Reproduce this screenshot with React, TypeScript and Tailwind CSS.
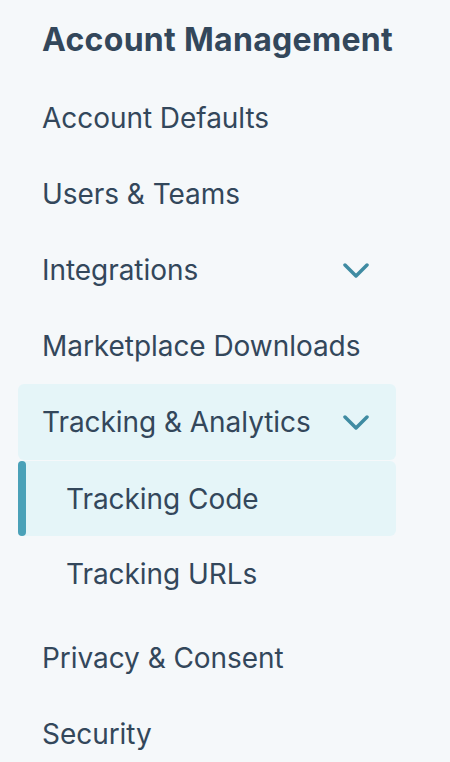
import React from 'react';

const Chevron: React.FC = () => (
  <svg width="26" height="15" viewBox="0 0 26 15" fill="none" className="shrink-0">
    <path d="M2 2l11 11L24 2" stroke="#3f8ba2" strokeWidth="3.5" strokeLinecap="round" strokeLinejoin="round" />
  </svg>
);

type NavItemProps = {
  label: string;
  hasChevron?: boolean;
  expanded?: boolean;
  sub?: boolean;
  selected?: boolean;
};

const NavItem: React.FC<NavItemProps> = ({ label, hasChevron, expanded, sub, selected }) => {
  const highlight = expanded || selected;
  return (
    <li
      className={`relative flex items-center justify-between rounded-md pr-[27px] ${
        sub ? 'pl-[48px]' : 'pl-[24px]'
      } ${highlight ? 'bg-[#e5f5f8]' : ''} ${selected ? 'mt-px h-[75px]' : 'h-[76px]'}`}
    >
      {selected && <span className="absolute left-0 top-0 h-full w-[8px] rounded-full bg-[#4aa1b8]" />}
      <span>{label}</span>
      {hasChevron && <Chevron />}
    </li>
  );
};

export default function App() {
  return (
    <div className="min-h-[762px] w-[450px] bg-[#f5f8fa] pl-[18px] text-[#33475b] [font-family:Inter,'Noto_Sans',sans-serif]">
      <h2 className="flex h-[80px] items-center pl-[24px] text-[32px] font-bold leading-none tracking-[0.3px]">
        Account Management
      </h2>
      <ul className="w-[378px] text-[28px] leading-none tracking-[-0.05px]">
        <NavItem label="Account Defaults" />
        <NavItem label="Users & Teams" />
        <NavItem label="Integrations" hasChevron />
        <NavItem label="Marketplace Downloads" />
        <NavItem label="Tracking & Analytics" hasChevron expanded />
        <li>
          <ul className="mb-[8px]">
            <NavItem label="Tracking Code" sub selected />
            <NavItem label="Tracking URLs" sub />
          </ul>
        </li>
        <NavItem label="Privacy & Consent" />
        <NavItem label="Security" />
      </ul>
    </div>
  );
}
